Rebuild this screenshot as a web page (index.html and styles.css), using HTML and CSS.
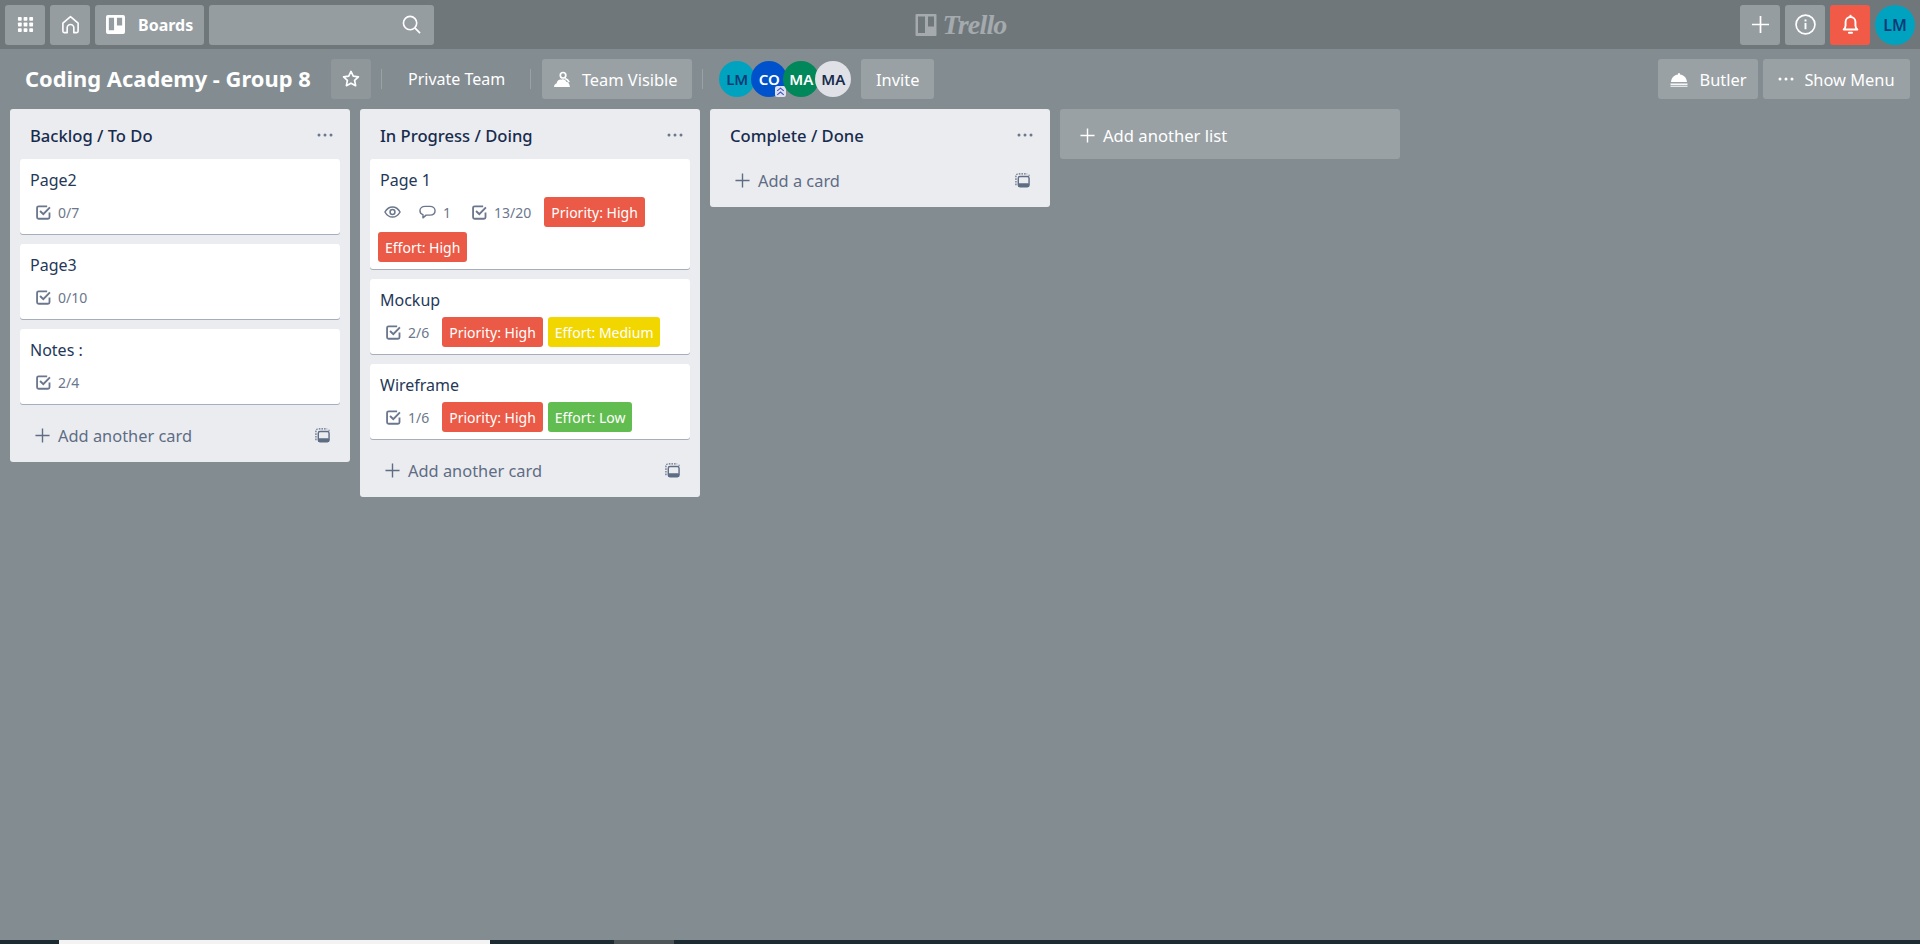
FILE: index.html
```html
<!DOCTYPE html>
<html lang="en">
<head>
<meta charset="utf-8">
<title>Coding Academy - Group 8 | Trello</title>
<link rel="stylesheet" href="styles.css">
</head>
<body>
<svg class="defs" width="0" height="0" aria-hidden="true">
  <symbol id="i-check" viewBox="0 0 14 14"><path d="M12.600 7v4.400c0 .9-.6 1.400-1.400 1.400H2.400c-.8 0-1.400-.5-1.400-1.400V2.600c0-.9.6-1.400 1.400-1.400h8" fill="none" stroke="currentColor" stroke-width="1.700"/><path d="M3.800 5.600l3 3L13 2.200" fill="none" stroke="currentColor" stroke-width="1.800"/></symbol>
  <symbol id="i-plus" viewBox="0 0 16 16"><path d="M8 .5v15M.5 8h15" stroke="currentColor" stroke-width="1.500" fill="none"/></symbol>
  <symbol id="i-tpl" viewBox="0 0 16 16"><path d="M1 13V3.500Q1 1 3.500 1H13" fill="none" stroke="currentColor" stroke-width="1.300" stroke-dasharray="1.700 1.100"/><path d="M15 3V1.800" stroke="currentColor" stroke-width="1.300" fill="none"/><rect x="3.500" y="3.700" width="11.500" height="11" rx="1.800" fill="none" stroke="currentColor" stroke-width="1.500"/><rect x="3.500" y="11" width="11.500" height="4" rx="1" fill="currentColor"/></symbol>
</svg>

<header class="topbar">
  <div class="top-left">
    <button class="tbtn"><svg class="ic20" viewBox="0 0 18 18"><g fill="currentColor"><rect x="1" y="1" width="4" height="4" rx=".8"/><rect x="7" y="1" width="4" height="4" rx=".8"/><rect x="13" y="1" width="4" height="4" rx=".8"/><rect x="1" y="7" width="4" height="4" rx=".8"/><rect x="7" y="7" width="4" height="4" rx=".8"/><rect x="13" y="7" width="4" height="4" rx=".8"/><rect x="1" y="13" width="4" height="4" rx=".8"/><rect x="7" y="13" width="4" height="4" rx=".8"/><rect x="13" y="13" width="4" height="4" rx=".8"/></g></svg></button>
    <button class="tbtn"><svg class="ic20 tall" viewBox="0 0 20 20"><path d="M6.500 18.600H3.400c-.8 0-1.400-.6-1.400-1.400V8.600L10 1.600l8 7v8.600c0 .8-.6 1.400-1.400 1.400h-3.100v-5.100a3.500 3.500 0 0 0-7 0z" fill="none" stroke="currentColor" stroke-width="1.700" stroke-linejoin="round"/></svg></button>
    <button class="tbtn boards"><svg class="ic20 large" viewBox="0 0 20 20"><path fill-rule="evenodd" d="M2 0h16a2 2 0 0 1 2 2v16a2 2 0 0 1-2 2H2a2 2 0 0 1-2-2V2a2 2 0 0 1 2-2zm1 3v13h5.500V3zm8.500 0v8H17V3z" fill="currentColor"/></svg><span>Boards</span></button>
    <div class="search"><svg class="ic20 large" viewBox="0 0 20 20"><circle cx="8.500" cy="8.500" r="7" fill="none" stroke="currentColor" stroke-width="1.700"/><path d="M13.500 13.500l5.500 5.500" stroke="currentColor" stroke-width="1.800" fill="none"/></svg></div>
  </div>
  <div class="logo">
    <svg class="logo-mark" viewBox="0 0 21 22"><path fill-rule="evenodd" d="M1 0h19a1 1 0 0 1 1 1v20a1 1 0 0 1-1 1H1a1 1 0 0 1-1-1V1a1 1 0 0 1 1-1zm1.500 2.500v16.500h7V2.500zm10 0v10h6v-10z" fill="currentColor"/></svg>
    <span class="logo-text">Trello</span>
  </div>
  <div class="top-right">
    <button class="tbtn"><svg class="ic20 large" viewBox="0 0 20 20"><path d="M10 1v18M1 10h18" stroke="currentColor" stroke-width="1.800" fill="none"/></svg></button>
    <button class="tbtn"><svg class="ic20 huge" viewBox="0 0 20 20"><circle cx="10" cy="10" r="9" fill="none" stroke="currentColor" stroke-width="1.600"/><rect x="9.100" y="8.500" width="1.800" height="6" fill="currentColor"/><rect x="9.100" y="5.200" width="1.800" height="1.900" fill="currentColor"/></svg></button>
    <button class="tbtn alert"><svg class="ic20 huge" viewBox="0 0 20 20"><path d="M3.500 14.800c1-.8 1.800-1.900 1.800-3.800V7.500a4.700 4.700 0 0 1 9.400 0V11c0 1.900.8 3 1.800 3.800z" fill="none" stroke="currentColor" stroke-width="1.800" stroke-linejoin="round"/><path d="M10 .8v2" stroke="currentColor" stroke-width="1.800"/><rect x="7.600" y="17" width="4.800" height="1.800" rx=".9" fill="currentColor"/></svg></button>
    <div class="avatar big lm">LM</div>
  </div>
</header>

<div class="boardbar">
  <div class="board-left">
    <h1 class="board-title">Coding Academy - Group 8</h1>
    <button class="bbtn square"><svg class="ic-star" viewBox="0 0 16 16"><path d="M8 1.300l2 4.200 4.600.6-3.400 3.200.9 4.600L8 11.700 3.900 13.900l.9-4.600L1.400 6.100 6 5.500z" fill="none" stroke="currentColor" stroke-width="1.500" stroke-linejoin="round"/></svg></button>
    <i class="sep first"></i>
    <span class="plain">Private Team</span>
    <i class="sep second"></i>
    <button class="bbtn visible"><svg class="ic16 wide" viewBox="0 0 17 16"><circle cx="9.500" cy="4" r="2.600" fill="none" stroke="currentColor" stroke-width="1.600"/><path d="M1 15c0-1.500.8-3 2.300-3.300C4 9 6 7.500 8 8.200c2-1 4 0 4.500 2 1.500 0 3 1.500 3.500 4.800z" fill="currentColor"/><path d="M11.500 7c1.800.5 3 1.700 3.700 3.500" stroke="currentColor" stroke-width="1.600" fill="none"/></svg><span>Team Visible</span></button>
    <i class="sep"></i>
    <div class="members">
      <div class="avatar lm">LM</div>
      <div class="avatar co">CO<svg class="chev" viewBox="0 0 10 10"><rect width="10" height="10" rx="2" fill="#dfe1f0"/><path d="M2 4.500l3-2.500 3 2.500M2 8l3-2.500L8 8" fill="none" stroke="#3b55c9" stroke-width="1"/></svg></div>
      <div class="avatar ma1">MA</div>
      <div class="avatar ma2">MA</div>
    </div>
    <button class="bbtn invite">Invite</button>
  </div>
  <div class="board-right">
    <button class="bbtn butler"><svg class="ic16 wide" viewBox="0 0 18 16"><path d="M9 1.500a1 1 0 0 1 1 1v.6c3.800.5 6.500 3.200 7 7.400H1c.5-4.200 3.200-6.900 7-7.400v-.6a1 1 0 0 1 1-1z" fill="currentColor"/><rect x="0.500" y="12" width="17" height="1.400" fill="currentColor"/><rect x="0.500" y="14.200" width="17" height="1.200" fill="currentColor" opacity=".8"/></svg><span>Butler</span></button>
    <button class="bbtn menu"><svg class="ic16 dots" viewBox="0 0 16 4"><circle cx="2" cy="2" r="1.500" fill="currentColor"/><circle cx="8" cy="2" r="1.500" fill="currentColor"/><circle cx="14" cy="2" r="1.500" fill="currentColor"/></svg><span>Show Menu</span></button>
  </div>
</div>

<main class="board">
  <section class="list">
    <div class="list-head"><h2>Backlog / To Do</h2><svg class="more" viewBox="0 0 16 4"><circle cx="2" cy="2" r="1.500"/><circle cx="8" cy="2" r="1.500"/><circle cx="14" cy="2" r="1.500"/></svg></div>
    <article class="card"><div class="card-title">Page2</div><div class="meta"><span class="badge"><svg class="b-check"><use href="#i-check"/></svg>0/7</span></div></article>
    <article class="card"><div class="card-title">Page3</div><div class="meta"><span class="badge"><svg class="b-check"><use href="#i-check"/></svg>0/10</span></div></article>
    <article class="card"><div class="card-title">Notes :</div><div class="meta"><span class="badge"><svg class="b-check"><use href="#i-check"/></svg>2/4</span></div></article>
    <div class="add-card"><svg class="add-plus"><use href="#i-plus"/></svg><span>Add another card</span><svg class="tpl"><use href="#i-tpl"/></svg></div>
  </section>

  <section class="list">
    <div class="list-head"><h2>In Progress / Doing</h2><svg class="more" viewBox="0 0 16 4"><circle cx="2" cy="2" r="1.500"/><circle cx="8" cy="2" r="1.500"/><circle cx="14" cy="2" r="1.500"/></svg></div>
    <article class="card"><div class="card-title">Page 1</div><div class="meta">
      <span class="badge icon-only"><svg class="b-eye" viewBox="0 0 18 14"><path d="M1 7c2-3.600 4.800-5.400 8-5.400s6 1.800 8 5.400c-2 3.600-4.800 5.400-8 5.400S3 10.600 1 7z" fill="none" stroke="currentColor" stroke-width="1.600"/><circle cx="9" cy="7" r="2.600" fill="none" stroke="currentColor" stroke-width="1.600"/></svg></span>
      <span class="badge comment"><svg class="b-eye" viewBox="0 0 18 14"><path d="M6.500 1h5c3 0 5.500 1.800 5.500 4.700 0 3-2.500 4.600-5.500 4.600H7.500l-3.300 2.900v-3.400C2.200 9.200 1 7.700 1 5.700 1 2.800 3.500 1 6.500 1z" fill="none" stroke="currentColor" stroke-width="1.500" stroke-linejoin="round"/></svg>1</span>
      <span class="badge"><svg class="b-check"><use href="#i-check"/></svg>13/20</span>
      <span class="label red">Priority: High</span>
      <span class="label red">Effort: High</span>
    </div></article>
    <article class="card"><div class="card-title">Mockup</div><div class="meta"><span class="badge"><svg class="b-check"><use href="#i-check"/></svg>2/6</span><span class="label red">Priority: High</span><span class="label yellow">Effort: Medium</span></div></article>
    <article class="card"><div class="card-title">Wireframe</div><div class="meta"><span class="badge"><svg class="b-check"><use href="#i-check"/></svg>1/6</span><span class="label red">Priority: High</span><span class="label green">Effort: Low</span></div></article>
    <div class="add-card"><svg class="add-plus"><use href="#i-plus"/></svg><span>Add another card</span><svg class="tpl"><use href="#i-tpl"/></svg></div>
  </section>

  <section class="list">
    <div class="list-head"><h2>Complete / Done</h2><svg class="more" viewBox="0 0 16 4"><circle cx="2" cy="2" r="1.500"/><circle cx="8" cy="2" r="1.500"/><circle cx="14" cy="2" r="1.500"/></svg></div>
    <div class="add-card"><svg class="add-plus"><use href="#i-plus"/></svg><span>Add a card</span><svg class="tpl"><use href="#i-tpl"/></svg></div>
  </section>

  <div class="add-list"><svg class="add-plus"><use href="#i-plus"/></svg><span>Add another list</span></div>
</main>

<footer class="strip"><i class="s-a"></i><i class="s-b"></i><i class="s-c"></i><i class="s-d"></i></footer>
</body>
</html>
```

FILE: styles.css
```css
* { box-sizing: border-box; }
html, body { height: 100%; }
body {
  margin: 0;
  height: 944px;
  overflow: hidden;
  display: flex;
  flex-direction: column;
  background: #838c91;
  color: #172b4d;
  font-family: "Noto Sans", "Open Sans", sans-serif;
  font-size: 14px;
}
button { font: inherit; border: 0; color: #fff; cursor: pointer; }
.defs { position: absolute; }
svg { display: block; flex: none; }

.topbar {
  height: 49px;
  flex: none;
  display: flex;
  align-items: center;
  padding: 0 5px;
  background: #6f777b;
}
.top-left, .top-right { flex: 1 1 0; display: flex; gap: 5px; }
.top-right { justify-content: flex-end; }
.tbtn {
  width: 40px;
  height: 40px;
  padding: 0;
  display: flex;
  align-items: center;
  justify-content: center;
  background: #969da1;
  border-radius: 3px;
}
.boards { width: 109px; justify-content: flex-start; padding-left: 11px; gap: 13px; font-size: 16px; font-weight: 700; }
.alert { background: #f15a46; }
.search {
  width: 225px;
  height: 40px;
  display: flex;
  align-items: center;
  justify-content: flex-end;
  padding-right: 13px;
  color: #fff;
  background: #969da1;
  border-radius: 3px;
}
.ic20 { width: 17px; height: 17px; }
.ic20.tall { width: 19px; height: 19px; }
.ic20.large { width: 19px; height: 19px; }
.ic20.huge { width: 21px; height: 21px; }
.ic-star { width: 18px; height: 18px; }
.ic16 { width: 16px; height: 16px; }
.ic16.wide { width: 18px; height: 17px; }
.ic16.dots { height: 4px; }

.logo { display: flex; align-items: center; gap: 5px; color: #a4aaad; margin-left: 2px; }
.logo-mark { width: 22px; height: 22px; }
.logo-text {
  font-family: "Liberation Serif", serif;
  font-style: italic;
  font-weight: 700;
  font-size: 28px;
  letter-spacing: -.8px;
  line-height: 30px;
}

.avatar {
  position: relative;
  width: 36px;
  height: 36px;
  flex: none;
  display: flex;
  align-items: center;
  justify-content: center;
  border-radius: 50%;
  font-weight: 600;
  font-size: 15px;
}
.avatar.big { width: 40px; height: 40px; font-size: 16px; }
.lm { background: #00a3bf; color: #0a3b78; }
.co { background: #0052cc; color: #fff; }
.ma1 { background: #00875a; color: #fff; }
.ma2 { background: #dfe1e6; color: #172b4d; }
.chev { position: absolute; width: 11px; height: 11px; right: 1px; bottom: 0; }

.boardbar {
  height: 60px;
  flex: none;
  display: flex;
  align-items: center;
  justify-content: space-between;
  padding: 0 10px 0 25px;
  color: #fff;
}
.board-left, .board-right { display: flex; align-items: center; }
.board-right { gap: 5px; }
.board-title { width: 306px; margin: 0; font-size: 21.9px; font-weight: 700; line-height: 24px; white-space: nowrap; }
.bbtn {
  height: 40px;
  display: flex;
  align-items: center;
  justify-content: center;
  background: #9aa1a5;
  border-radius: 3px;
  font-size: 16.4px;
  white-space: nowrap;
  padding: 0;
}
.square { width: 40px; background: #8f979b; }
.sep { display: block; width: 1px; height: 20px; background: #9aa1a5; margin: 0 10px; }
.sep.first { margin-right: 0; }
.sep.second { margin-right: 11px; }
.plain { font-size: 16px; padding: 0 15px 0 26px; white-space: nowrap; }
.visible { width: 150px; gap: 11px; padding-right: 4px; }
.members { display: flex; align-items: center; margin: 0 10px 0 6px; }
.members .avatar + .avatar { margin-left: -4px; }
.invite { width: 73px; }
.butler { width: 100px; gap: 12px; }
.menu { width: 147px; gap: 10px; }

.board {
  flex: 1;
  min-height: 0;
  display: flex;
  align-items: flex-start;
  gap: 10px;
  padding: 0 10px;
}
.list {
  width: 340px;
  flex: none;
  padding: 0 10px;
  background: #ebecf0;
  border-radius: 3px;
}
.list-head { height: 50px; display: flex; align-items: center; justify-content: space-between; padding: 4px 7px 0 10px; }
.list-head h2 { margin: 0; font-size: 16.6px; font-weight: 500; line-height: 20px; color: #172b4d; }
.more { width: 16px; height: 4px; fill: #6b778c; margin-top: -2px; }

.card {
  margin-bottom: 10px;
  padding: 9px 8px 7px;
  background: #fff;
  border-radius: 3px;
  box-shadow: 0 1px 0 rgba(9, 30, 66, .3);
}
.card-title { height: 29px; padding-left: 2px; font-size: 16px; line-height: 24px; color: #253858; }
.meta { display: flex; flex-wrap: wrap; gap: 5px; }
.badge {
  height: 30px;
  display: flex;
  align-items: center;
  gap: 7px;
  padding: 0 8px;
  font-size: 14px;
  color: #6b778c;
}
.icon-only, .comment { padding-left: 6px; }
.icon-only { padding-right: 7px; }
.b-check { width: 15px; height: 15px; }
.b-eye { width: 17px; height: 14px; }
.label {
  height: 30px;
  display: flex;
  align-items: center;
  padding: 0 7px;
  font-size: 14px;
  color: #fff;
  border-radius: 3px;
}
.red { background: #eb5a46; }
.yellow { background: #f2d600; }
.green { background: #61bd4f; }

.add-card {
  height: 42px;
  margin-bottom: 6px;
  display: flex;
  align-items: center;
  padding: 0 10px 0 15px;
  font-size: 16.4px;
  color: #5e6c84;
}
.add-card span { flex: 1; margin-left: 8px; }
.add-plus { width: 15px; height: 15px; }
.tpl { width: 15px; height: 15px; }

.add-list {
  width: 340px;
  height: 50px;
  flex: none;
  display: flex;
  align-items: center;
  gap: 8px;
  padding: 2px 20px 0;
  color: #fff;
  font-size: 16.6px;
  background: #9aa1a5;
  border-radius: 3px;
}

.strip { height: 4px; flex: none; display: flex; background: #1c2b31; }
.strip i { display: block; }
.s-a { width: 59px; }
.s-b { width: 431px; background: #f3f3f3; }
.s-c { width: 124px; }
.s-d { width: 60px; background: #4e5558; }
```
